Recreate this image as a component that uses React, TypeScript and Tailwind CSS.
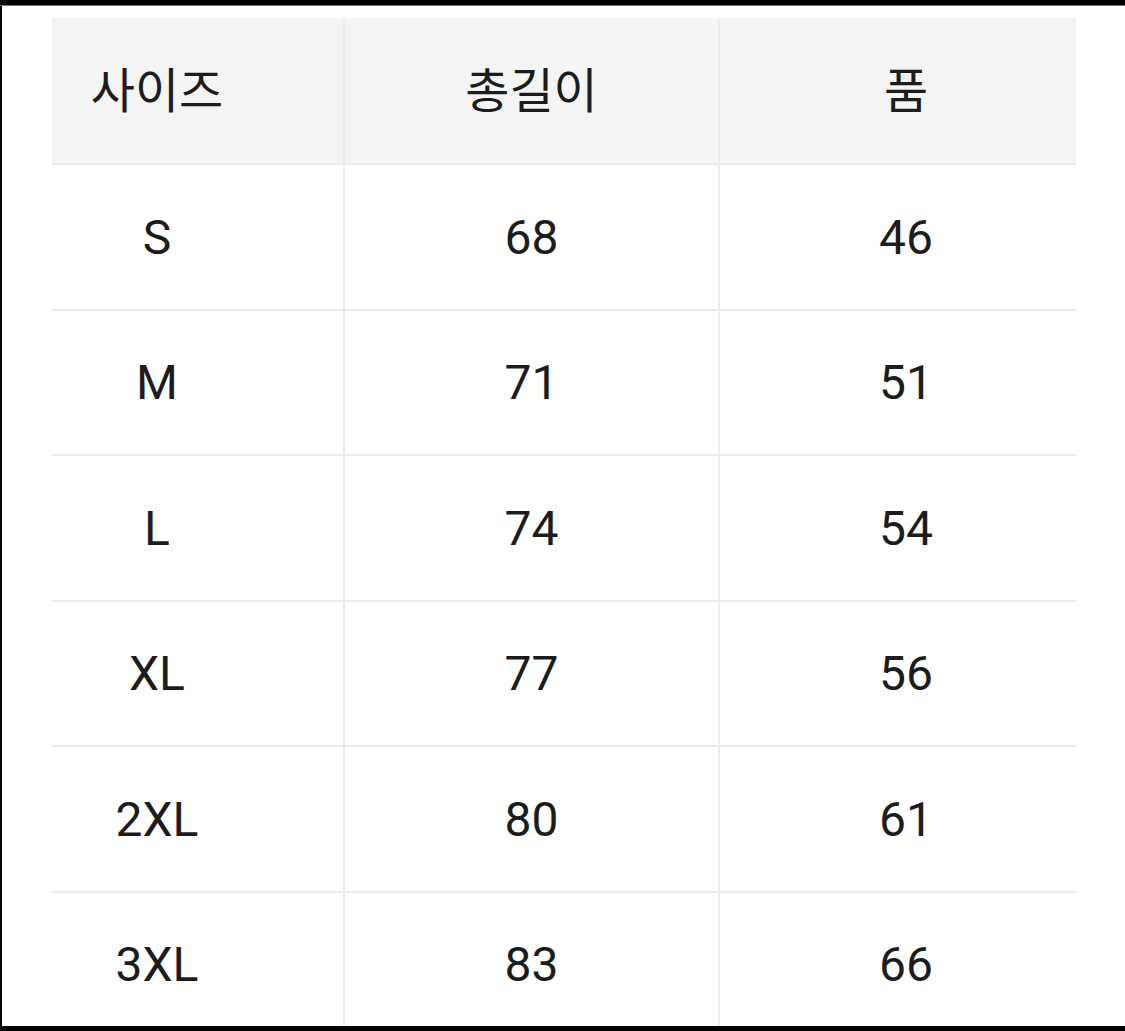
import React from "react";

const rows: [string, string, string][] = [
  ["S", "68", "46"],
  ["M", "71", "51"],
  ["L", "74", "54"],
  ["XL", "77", "56"],
  ["2XL", "80", "61"],
  ["3XL", "83", "66"],
];

export default function App() {
  const font = { fontFamily: 'Roboto, "Noto Sans CJK KR", sans-serif' };
  return (
    <div className="w-[1125px] h-[1031px] bg-black flex flex-col overflow-hidden" style={font}>
      <div className="h-[5px] shrink-0 bg-black" />
      <div className="h-[1px] shrink-0 bg-[#777]" />
      <div className="flex-1 bg-white ml-[2px] overflow-hidden pt-[12px] pl-[50px]">
        <div className="w-[1024px] text-[48px] text-[#1c1c1c] leading-none">
          <div className="flex h-[147px] bg-[#f4f4f4] border-b-2 border-[#ebebeb]">
            <div className="w-[293px] border-r-2 border-[#ebebeb] flex items-center justify-center pr-[81px] pt-[3px]">사이즈</div>
            <div className="w-[375px] border-r-2 border-[#ebebeb] flex items-center justify-center pt-[3px]">총길이</div>
            <div className="flex-1 flex items-center justify-center pl-[16px] pt-[3px]">품</div>
          </div>
          {rows.map((r) => (
            <div key={r[0]} className="flex h-[145.5px] border-b-2 border-[#ececec]">
              <div className="w-[293px] border-r-2 border-[#ececec] flex items-center justify-center pr-[81px] pt-[2px]">{r[0]}</div>
              <div className="w-[375px] border-r-2 border-[#ececec] flex items-center justify-center pt-[2px]">{r[1]}</div>
              <div className="flex-1 flex items-center justify-center pl-[16px] pt-[2px]">{r[2]}</div>
            </div>
          ))}
        </div>
      </div>
      <div className="h-[5px] shrink-0 bg-black" />
    </div>
  );
}
